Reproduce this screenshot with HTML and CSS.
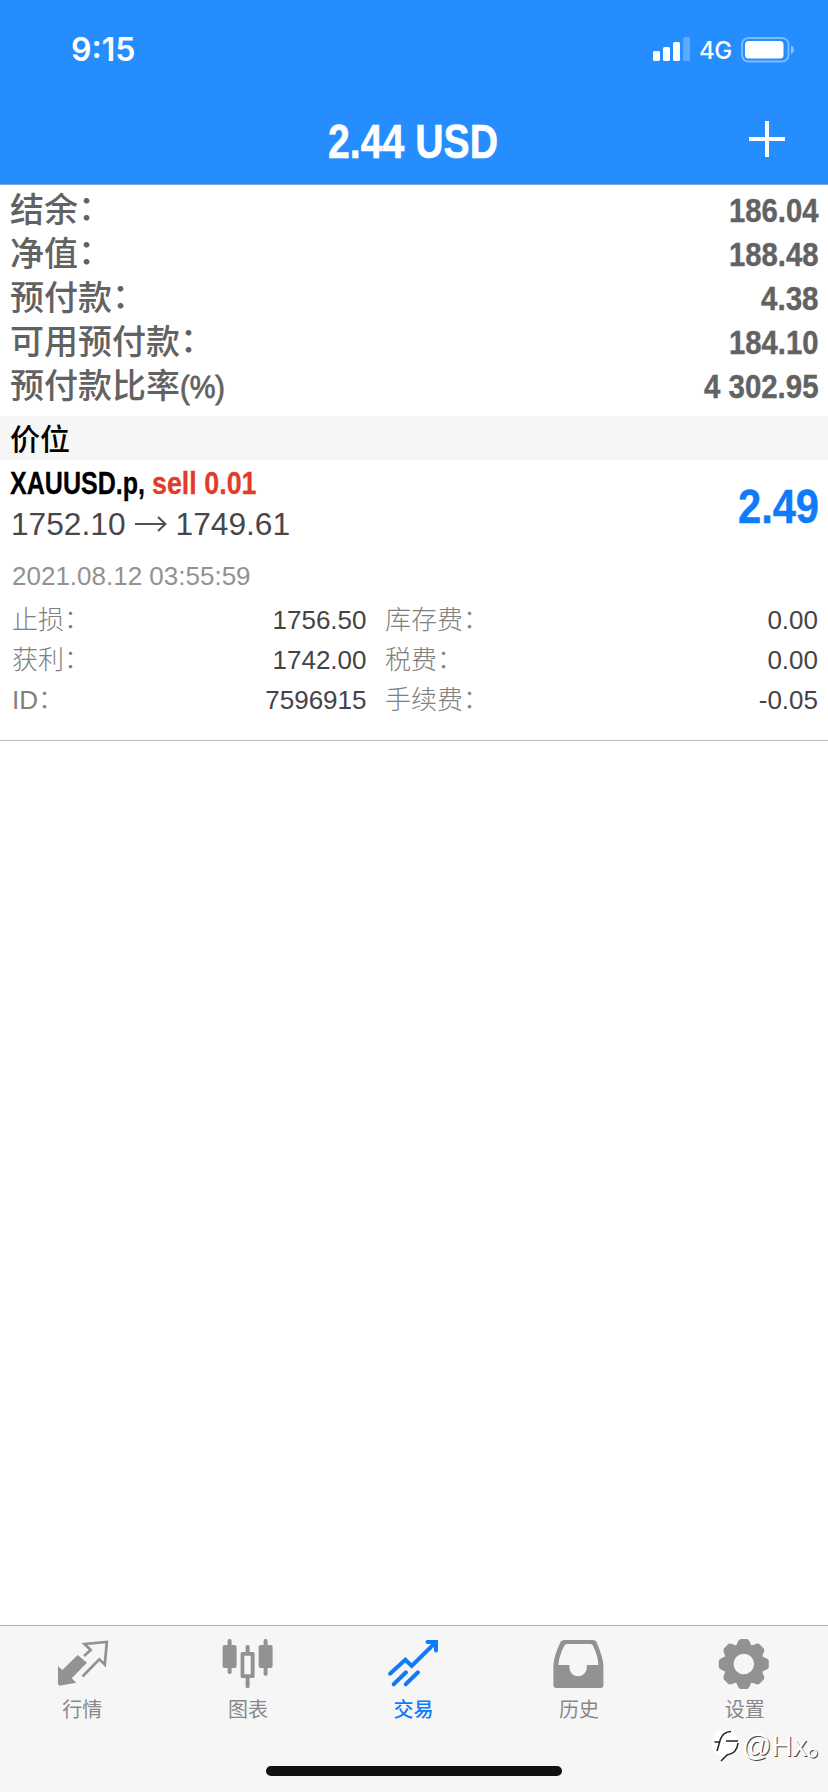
FILE: index.html
```html
<!DOCTYPE html>
<html lang="zh-CN">
<head>
<meta charset="utf-8">
<title>交易</title>
<link rel="stylesheet" href="styles.css">
</head>
<body>
<div class="app">
  <header class="header">
    <div class="status">
      <span class="time">9:15</span>
      <div class="status-right">
        <svg class="signal" width="38" height="24" viewBox="0 0 38 24" fill="#fff">
          <rect x="0" y="14" width="7" height="10" rx="1.5"/>
          <rect x="10" y="10" width="7" height="14" rx="1.5"/>
          <rect x="20" y="5" width="7" height="19" rx="1.5"/>
          <rect x="30" y="0" width="7" height="24" rx="1.5" opacity=".25"/>
        </svg>
        <span class="network">4G</span>
        <svg class="battery" width="54" height="26" viewBox="0 0 54 26">
          <rect x="1" y="1" width="46.500" height="23.500" rx="6.500" fill="none" stroke="#fff" stroke-opacity=".4" stroke-width="2"/>
          <rect x="4" y="4" width="38.500" height="17.500" rx="3.500" fill="#fff"/>
          <path d="M50 8.500c4 1.500 4 7 0 8.500z" fill="#fff" fill-opacity=".45"/>
        </svg>
      </div>
    </div>
    <div class="titlebar">
      <svg class="title" width="176" height="60"><text x="0" y="48" textLength="170" lengthAdjust="spacingAndGlyphs">2.44 USD</text></svg>
      <svg class="add" width="36" height="36"><path d="M18 0v36M0 18h36" stroke="#fff" stroke-width="4"/></svg>
    </div>
  </header>

  <section class="summary">
    <div class="row"><span class="label">结余<i>：</i></span><svg class="amount" width="130" height="43"><text x="30" y="34" textLength="89.500" lengthAdjust="spacingAndGlyphs">186.04</text></svg></div>
    <div class="row"><span class="label">净值<i>：</i></span><svg class="amount" width="130" height="43"><text x="30" y="34" textLength="89.500" lengthAdjust="spacingAndGlyphs">188.48</text></svg></div>
    <div class="row"><span class="label">预付款<i>：</i></span><svg class="amount" width="130" height="43"><text x="62" y="34" textLength="57.500" lengthAdjust="spacingAndGlyphs">4.38</text></svg></div>
    <div class="row"><span class="label">可用预付款<i>：</i></span><svg class="amount" width="130" height="43"><text x="30" y="34" textLength="89.500" lengthAdjust="spacingAndGlyphs">184.10</text></svg></div>
    <div class="row"><span class="label">预付款比率</span><svg class="percent" width="48" height="43"><text x="0" y="34" textLength="45" lengthAdjust="spacingAndGlyphs">(%)</text></svg><svg class="amount" width="130" height="43"><text x="5" y="34" textLength="114.500" lengthAdjust="spacingAndGlyphs">4 302.95</text></svg></div>
  </section>

  <h2 class="section">价位</h2>

  <article class="position">
    <div class="position-top">
      <div>
        <div class="symbol"><svg width="142" height="45"><text x="0" y="34" textLength="135" lengthAdjust="spacingAndGlyphs">XAUUSD.p,</text></svg><svg class="sell" width="112" height="45"><text x="0" y="34" textLength="104.500" lengthAdjust="spacingAndGlyphs">sell 0.01</text></svg></div>
        <div class="prices"><span>1752.10</span><svg width="32" height="16" viewBox="0 0 32 16" fill="none" stroke="#505055" stroke-width="2"><path d="M0 8h30M23 1l7.500 7-7.500 7"/></svg><span>1749.61</span></div>
      </div>
      <svg class="profit" width="92" height="60"><text x="11" y="47" textLength="81" lengthAdjust="spacingAndGlyphs">2.49</text></svg>
    </div>
    <div class="date">2021.08.12 03:55:59</div>
    <div class="details">
      <div class="pair"><span>止损<i>：</i></span><b>1756.50</b></div><div class="pair"><span>库存费<i>：</i></span><b>0.00</b></div>
      <div class="pair"><span>获利<i>：</i></span><b>1742.00</b></div><div class="pair"><span>税费<i>：</i></span><b>0.00</b></div>
      <div class="pair"><span>ID<i>：</i></span><b>7596915</b></div><div class="pair"><span>手续费<i>：</i></span><b>-0.05</b></div>
    </div>
  </article>

  <main class="space"></main>

  <nav class="tabs">
    <div class="tab">
      <svg class="icon" width="52" height="52"><path d="M1 30l4.300 4L20.700 19 30 26.700 14.700 42.300l4.500 4.400L2.300 49.700 1 48z" fill="#929292"/><path d="M27 20l6.700-6-6.200-6 22.300-2-2 22.500-5.500-5.200-16.800 17.200" fill="none" stroke="#929292" stroke-width="2.700"/></svg>
      <span>行情</span>
    </div>
    <div class="tab">
      <svg class="icon" width="52" height="52" fill="#929292"><rect x=".6" y="9" width="14" height="23" rx="2"/><rect x="5.600" y="3" width="4" height="35" rx="1.800"/><path fill-rule="evenodd" d="M20.100 16h11q1.500 0 1.500 1.500v23q0 1.500-1.500 1.500h-11q-1.500 0-1.500-1.500v-23q0-1.500 1.500-1.500zM22.300 19.700v18.600h6.400V19.700z"/><rect x="23.600" y="9" width="4" height="9" rx="1.500"/><rect x="23.600" y="40" width="4" height="12" rx="1.500"/><rect x="36.600" y="9" width="14" height="23" rx="2"/><rect x="41.600" y="3" width="4" height="36.700" rx="1.800"/></svg>
      <span>图表</span>
    </div>
    <div class="tab active">
      <svg class="icon" width="52" height="52" fill="none" stroke="#0f7bfb" stroke-width="4" stroke-linecap="round"><path d="M2 37.700l15.300-14 6.400 6.300L47.500 6.500M5.700 48.300L18 36.300M17.700 48.300L30 36.300"/><path d="M39.500 6h8.500v8.500"/></svg>
      <span>交易</span>
    </div>
    <div class="tab">
      <svg class="icon" width="52" height="52"><path fill="#929292" fill-rule="evenodd" d="M11 4h27.500q3.500 0 4.500 3 6 15 6.400 22v20q0 3-3 3h-44q-3 0-3-3V29Q0 20 6 7q1-3 5-3zM13 8q-2 0-2.700 1.800Q5 20 4.400 29h11v2.500a8.700 8.700 0 0 0 17.400 0V29h11.600Q44 20 39 9.800 38.400 8 36.500 8z"/></svg>
      <span>历史</span>
    </div>
    <div class="tab">
      <svg class="icon" width="52" height="52"><defs><path id="tooth" d="M16 12l3-6.500Q20 3 22 3h5.600q2 0 3 2.500l3 6.500z"/></defs><g fill="#929292"><use href="#tooth"/><use href="#tooth" transform="rotate(45 24.800 28)"/><use href="#tooth" transform="rotate(90 24.800 28)"/><use href="#tooth" transform="rotate(135 24.800 28)"/><use href="#tooth" transform="rotate(180 24.800 28)"/><use href="#tooth" transform="rotate(225 24.800 28)"/><use href="#tooth" transform="rotate(270 24.800 28)"/><use href="#tooth" transform="rotate(315 24.800 28)"/></g><circle cx="24.800" cy="28" r="15.200" fill="none" stroke="#929292" stroke-width="9.800"/></svg>
      <span>设置</span>
    </div>
    <div class="home"></div>
    <div class="watermark">
      <svg width="30" height="34" viewBox="0 0 30 34"><circle cx="14" cy="14" r="13.500" fill="#fff"/><path d="M10 24v8l9-7z" fill="#fff"/><g fill="none" stroke="#222" stroke-width="1.500"><path d="M6 22l3.500-12Q12 3 20 2.500M3.500 13H8M15 12h12"/><path d="M27 14q-1 10.500-11 12l-6 6"/></g></svg>
      <span>@Hx。</span>
    </div>
  </nav>
</div>
</body>
</html>
```
FILE: styles.css
```css
* { box-sizing: border-box; }
body { margin: 0; background: #fff; font-family: "Liberation Sans", "Noto Sans CJK SC", sans-serif; }
svg { display: block; flex: none; overflow: visible; }
i { font-style: normal; }
.app { width: 828px; height: 1792px; display: flex; flex-direction: column; overflow: hidden; }

.header { height: 184.500px; flex: none; background: #268dff; color: #fff; border-bottom: 1px solid #7fa9dc; font-family: Inter, sans-serif; }
.status { height: 96px; padding: 0 33px 0 71px; display: flex; justify-content: space-between; align-items: flex-start; }
.time { padding-top: 30px; font-size: 32px; line-height: 40px; font-weight: 600; }
.status-right { display: flex; align-items: flex-start; padding-top: 37px; }
.network { width: 50px; padding-left: 8px; font-size: 24px; line-height: 28px; font-weight: 500; letter-spacing: -.5px; }
.titlebar { height: 88px; padding: 0 43px 0 328px; display: flex; justify-content: space-between; }
.title, .amount, .symbol, .profit { font-family: "Liberation Sans", sans-serif; font-weight: 700; }
.title { margin-top: 14px; font-size: 48px; fill: #fff; stroke: #fff; stroke-width: .6px; }
.add { margin-top: 25px; }

.summary { padding: 3px 0 8px 10px; flex: none; height: 231.500px; }
.row { height: 44px; display: flex; align-items: flex-start; }
.label { font-family: "Noto Sans CJK SC", sans-serif; font-size: 34px; line-height: 40px; font-weight: 500; color: #626262; white-space: nowrap; }
.label i { display: inline-block; line-height: 34px; vertical-align: 2px; }
.percent { font-size: 32px; fill: #626262; stroke: #626262; stroke-width: .8px; }
.amount { margin-left: auto; margin-right: -1px; font-size: 33.500px; fill: #626262; stroke: #626262; stroke-width: .4px; }
.section { flex: none; height: 43.500px; margin: 0; padding: 0 10px; background: #f6f6f6; color: #000; font-family: "Noto Sans CJK SC", sans-serif; font-size: 30px; line-height: 42px; font-weight: 500; }

.position { flex: none; height: 281px; border-bottom: 1px solid #bcbcbc; padding: 0 10px; }
.position-top { height: 93px; display: flex; justify-content: space-between; }
.symbol { display: flex; font-size: 32px; fill: #000; stroke: #000; stroke-width: .3px; }
.sell { fill: #e13b2b; stroke: #e13b2b; }
.prices { display: flex; align-items: center; gap: 9px; height: 38px; padding-left: 1px; font-size: 31.700px; line-height: 38px; color: #47474b; }
.profit { margin-top: 16px; margin-right: -1px; font-size: 48px; fill: #0f7bfb; stroke: #0f7bfb; stroke-width: .5px; }
.date { padding: 5px 2px; height: 47px; font-size: 26px; line-height: 36px; color: #929292; }
.details { display: grid; grid-template-columns: 354.500px 433px; column-gap: 18.500px; grid-auto-rows: 40px; padding-left: 2px; }
.pair { display: flex; justify-content: space-between; font-size: 26px; line-height: 40px; color: #808080; }
.pair span { font-family: "Liberation Sans", "Noto Sans CJK SC", sans-serif; font-weight: 300; white-space: nowrap; }
.pair i { display: inline-block; line-height: 30px; vertical-align: 1px; }
.pair b { font-weight: 400; color: #444448; }

.space { flex: 1; }
.tabs { position: relative; flex: none; height: 167.500px; display: grid; grid-template-columns: repeat(5, 1fr); background: #f6f6f6; border-top: 1px solid #b2b2b2; }
.tab { display: flex; flex-direction: column; align-items: center; padding-top: 10px; color: #888; font-family: "Noto Sans CJK SC", sans-serif; font-size: 20px; line-height: 28px; }
.tab span { margin-top: 7px; margin-right: 1px; }
.active { color: #0f7bfb; font-weight: 500; }
.home { position: absolute; left: 266px; bottom: 16px; width: 296px; height: 10px; border-radius: 5px; background: #111; }
.watermark { position: absolute; left: 711px; bottom: 22px; display: flex; align-items: center; gap: 1px; height: 48px; color: #fff; font-family: "Liberation Sans", "Noto Sans CJK SC", sans-serif; font-size: 29px; line-height: 48px; text-shadow: 1px 1px 0 #444; white-space: nowrap; }
```
